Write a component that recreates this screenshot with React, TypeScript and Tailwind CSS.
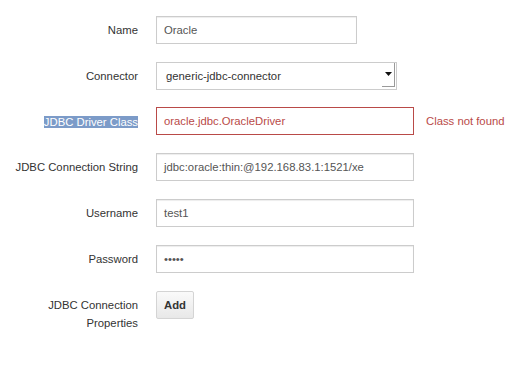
import React from "react";

const font = { fontFamily: '"Liberation Sans", Arial, sans-serif' };

function Row({ label, children, extra }: { label: React.ReactNode; children: React.ReactNode; extra?: React.ReactNode }) {
  return (
    <div className="flex items-start">
      <div className="w-[138px] shrink-0 pt-[5px] text-right text-[11.3px] leading-[18px] text-[#333]">{label}</div>
      <div className="ml-[18px] flex items-center">
        {children}
        {extra}
      </div>
    </div>
  );
}

function Field({ value, width, error }: { value: string; width: string; error?: boolean }) {
  return (
    <div
      className={`flex h-[28px] items-center border px-[7px] text-[11.3px] ${width} ${
        error ? "border-[#b94a48] text-[#b94a48]" : "border-[#cccccc] text-[#555] shadow-[inset_0_1px_1px_rgba(0,0,0,0.075)]"
      }`}
    >
      {value}
    </div>
  );
}

export default function App() {
  return (
    <div className="min-h-[383px] w-[516px] bg-white pt-[16px]" style={font}>
      <div className="flex flex-col gap-[18px]">
        <Row label="Name">
          <Field value="Oracle" width="w-[201px]" />
        </Row>
        <Row label="Connector">
          <div className="relative flex h-[28px] w-[241px] items-center border border-[#cccccc] bg-white pl-[9px] text-[11.3px] text-[#333]">
            generic-jdbc-connector
            <div className="absolute right-[1px] top-[0px] flex h-[24px] w-[13px] items-center justify-center border-b border-r border-[#9a9a9a]">
              <svg width="7" height="5" viewBox="0 0 7 5">
                <path d="M0 0 L7 0 L3.5 4 Z" fill="#111" />
              </svg>
            </div>
          </div>
        </Row>
        <Row
          label={<span className="bg-[#7c9bc8] text-white">JDBC Driver Class</span>}
          extra={<span className="ml-[12px] text-[11.3px] text-[#b94a48]">Class not found</span>}
        >
          <div className="-mt-px">
            <Field value="oracle.jdbc.OracleDriver" width="w-[258px]" error />
          </div>
        </Row>
        <Row label="JDBC Connection String">
          <Field value="jdbc:oracle:thin:@192.168.83.1:1521/xe" width="w-[258px]" />
        </Row>
        <Row label="Username">
          <Field value="test1" width="w-[258px]" />
        </Row>
        <Row label="Password">
          <Field value="•••••" width="w-[258px]" />
        </Row>
        <Row
          label={
            <>
              JDBC Connection
              <br />
              Properties
            </>
          }
        >
          <div className="flex h-[28px] w-[38px] items-center justify-center rounded-[2px] border border-[#d4d4d4] bg-gradient-to-b from-[#fafafa] to-[#e8e8e8] text-[11.3px] font-bold text-[#333]">
            Add
          </div>
        </Row>
      </div>
    </div>
  );
}
